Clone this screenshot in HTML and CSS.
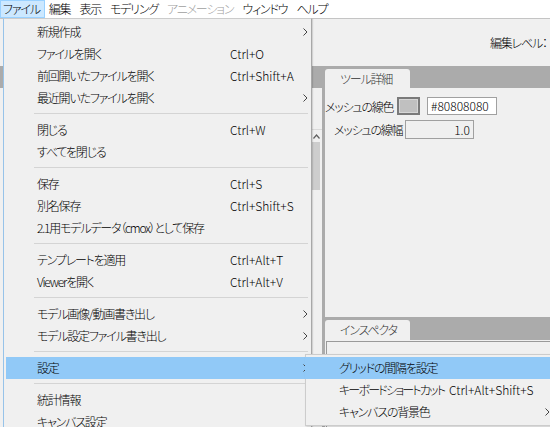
FILE: index.html
```html
<!DOCTYPE html>
<html lang="ja">
<head>
<meta charset="utf-8">
<title>File menu</title>
<link rel="stylesheet" href="styles.css">
</head>
<body>
<div class="window">
  <nav class="menubar">
    <span class="mb-item active">ファイル</span>
    <span class="mb-item">編集</span>
    <span class="mb-item">表示</span>
    <span class="mb-item">モデリング</span>
    <span class="mb-item disabled">アニメーション</span>
    <span class="mb-item">ウィンドウ</span>
    <span class="mb-item">ヘルプ</span>
  </nav>
  <div class="main">
    <div class="toolbar"><span class="edit-level">編集レベル：</span></div>
    <div class="workspace">
      <section class="left-panel">
        <div class="panel-head"></div>
        <div class="left-body">
          <div class="scrollbar">
            <div class="sb-up"><svg width="7" height="5" viewBox="0 0 7 5"><polyline points="0.5,4.5 3.5,1 6.5,4.5" fill="none" stroke="#606060" stroke-width="1.2"/></svg></div>
            <div class="sb-thumb"></div>
          </div>
        </div>
      </section>
      <section class="right-col">
        <div class="tool-panel">
          <div class="panel-head"><div class="tab">ツール詳細</div></div>
          <div class="tool-body">
            <div class="row row-color">
              <span class="lbl lbl-color">メッシュの線色</span>
              <span class="swatch"></span>
              <span class="field field-hex">#80808080</span>
            </div>
            <div class="row row-width">
              <span class="lbl lbl-width">メッシュの線幅</span>
              <span class="field field-num">1.0</span>
            </div>
          </div>
        </div>
        <div class="inspector">
          <div class="panel-head insp-head"><div class="tab tab-insp">インスペクタ</div></div>
          <div class="insp-body"><div class="insp-box"></div></div>
        </div>
      </section>
    </div>
  </div>

  <div class="menu">
    <div class="mi"><span></span><span>新規作成</span><span></span><span class="arr"><svg width="5" height="8" viewBox="0 0 5 8"><polyline points="0.5,0.5 4,4 0.5,7.5" fill="none" stroke="#444" stroke-width="1"/></svg></span></div>
    <div class="mi"><span></span><span>ファイルを開く</span><span>Ctrl+O</span><span></span></div>
    <div class="mi"><span></span><span>前回開いたファイルを開く</span><span>Ctrl+Shift+A</span><span></span></div>
    <div class="mi"><span></span><span>最近開いたファイルを開く</span><span></span><span class="arr"><svg width="5" height="8" viewBox="0 0 5 8"><polyline points="0.5,0.5 4,4 0.5,7.5" fill="none" stroke="#444" stroke-width="1"/></svg></span></div>
    <div class="sep"></div>
    <div class="mi"><span></span><span>閉じる</span><span>Ctrl+W</span><span></span></div>
    <div class="mi"><span></span><span>すべてを閉じる</span><span></span><span></span></div>
    <div class="sep"></div>
    <div class="mi"><span></span><span>保存</span><span>Ctrl+S</span><span></span></div>
    <div class="mi"><span></span><span>別名保存</span><span>Ctrl+Shift+S</span><span></span></div>
    <div class="mi"><span></span><span class="wide">2.1用モデルデータ（cmox）として保存</span><span></span></div>
    <div class="sep"></div>
    <div class="mi"><span></span><span>テンプレートを適用</span><span>Ctrl+Alt+T</span><span></span></div>
    <div class="mi"><span></span><span>Viewerを開く</span><span>Ctrl+Alt+V</span><span></span></div>
    <div class="sep"></div>
    <div class="mi"><span></span><span>モデル画像/動画書き出し</span><span></span><span class="arr"><svg width="5" height="8" viewBox="0 0 5 8"><polyline points="0.5,0.5 4,4 0.5,7.5" fill="none" stroke="#444" stroke-width="1"/></svg></span></div>
    <div class="mi"><span></span><span>モデル設定ファイル書き出し</span><span></span><span class="arr"><svg width="5" height="8" viewBox="0 0 5 8"><polyline points="0.5,0.5 4,4 0.5,7.5" fill="none" stroke="#444" stroke-width="1"/></svg></span></div>
    <div class="sep"></div>
    <div class="mi hl"><span></span><span>設定</span><span></span><span class="arr"><svg width="5" height="8" viewBox="0 0 5 8"><polyline points="0.5,0.5 4,4 0.5,7.5" fill="none" stroke="#444" stroke-width="1"/></svg></span></div>
    <div class="sep"></div>
    <div class="mi"><span></span><span>統計情報</span><span></span><span></span></div>
    <div class="mi"><span></span><span>キャンバス設定</span><span></span><span></span></div>
  </div>

  <div class="submenu">
    <div class="si hl"><span></span><span>グリッドの間隔を設定</span><span></span><span></span></div>
    <div class="si"><span></span><span class="tight">キーボードショートカット</span><span>Ctrl+Alt+Shift+S</span><span></span></div>
    <div class="si"><span></span><span>キャンバスの背景色</span><span></span><span class="arr"><svg width="5" height="8" viewBox="0 0 5 8"><polyline points="0.5,0.5 4,4 0.5,7.5" fill="none" stroke="#444" stroke-width="1"/></svg></span></div>
  </div>
</div>
</body>
</html>
```

FILE: styles.css
```css
* { box-sizing: border-box; }

body {
  margin: 0;
  width: 550px;
  height: 427px;
  overflow: hidden;
  background: #f0f0f0;
  font-family: "Noto Sans CJK JP", "Noto Sans", sans-serif;
  font-feature-settings: "palt";
  font-size: 12px;
  font-weight: 300;
  color: #000;
}

/* Japanese labels: tighten to approximate the narrow UI face */
.mb-item,
.mi > span:nth-child(2),
.si > span:nth-child(2),
.lbl,
.tab,
.edit-level {
  letter-spacing: -1.2px;
}
.si > span.tight { letter-spacing: -1.8px; }

.window {
  position: relative;
  width: 550px;
  height: 427px;
  overflow: hidden;
  display: flex;
  flex-direction: column;
}

/* ---------- menu bar ---------- */
.menubar {
  height: 19px;
  flex-shrink: 0;
  background: #fff;
  border-bottom: 1px solid #c4c4c4;
  display: flex;
  align-items: stretch;
  white-space: nowrap;
}
.mb-item {
  padding: 0 4px 0 3px;
  line-height: 16px;
  border: 1px solid transparent;
}
.mb-item.active {
  padding-left: 2px;
  background: #cce8ff;
  border-color: #99d1ff;
}
.mb-item.disabled { color: #a0a0a0; }

/* ---------- main area ---------- */
.main {
  flex: 1;
  display: flex;
  flex-direction: column;
  min-height: 0;
}
.toolbar {
  height: 47px;
  flex-shrink: 0;
  display: flex;
  align-items: center;
  padding-left: 490px;
  white-space: nowrap;
  overflow: hidden;
}
.workspace {
  flex: 1;
  display: flex;
  background: #ababab;
  min-height: 0;
}
.panel-head {
  height: 22px;
  flex-shrink: 0;
}
.left-panel {
  width: 322px;
  flex-shrink: 0;
  display: flex;
  flex-direction: column;
}
.left-body {
  flex: 1;
  background: #f0f0f0;
  display: flex;
  justify-content: flex-end;
}
.scrollbar {
  width: 12px;
  margin-top: 41px;
  border-top: 1px solid #dadada;
  background: #f0f0f0;
  display: flex;
  flex-direction: column;
  align-items: stretch;
}
.sb-up {
  height: 12px;
  display: flex;
  align-items: center;
  justify-content: center;
}
.sb-thumb {
  height: 48px;
  margin: 0 2px;
  background: #cdcdcd;
}

.right-col {
  flex: 1;
  margin-left: 3px;
  display: flex;
  flex-direction: column;
  min-width: 0;
}
.tool-panel {
  height: 251px;
  flex-shrink: 0;
  display: flex;
  flex-direction: column;
}
.tab {
  margin-top: 3px;
  width: 85px;
  height: 19px;
  line-height: 19px;
  padding-left: 15px;
  background: #f0f0f0;
  border-radius: 3px 3px 0 0;
  color: #333;
}
.tool-body {
  flex: 1;
  background: #f0f0f0;
  padding-top: 9px;
}
.row {
  display: flex;
  align-items: center;
  white-space: nowrap;
}
.row-color { height: 18px; }
.row-width {
  height: 19px;
  margin-top: 5px;
  padding-left: 9px;
}
.lbl { flex-shrink: 0; }
.lbl-color { width: 72px; }
.lbl-width { width: 71px; }
.swatch {
  width: 23px;
  height: 18px;
  border: 2px solid #7a7a7a;
  background: #c0c0c0;
  box-shadow: inset 0 0 0 1px #d6d6d6;
  margin-right: 7px;
}
.field {
  height: 100%;
  border: 1px solid #a0a0a0;
  line-height: 16px;
}
.field-hex {
  width: 70px;
  background: #fff;
  padding-left: 3px;
}
.field-num {
  width: 69px;
  background: #f0f0f0;
  text-align: right;
  padding-right: 3px;
  line-height: 17px;
}

.inspector {
  flex: 1;
  display: flex;
  flex-direction: column;
}
.insp-head { height: 23px; }
.tab-insp {
  height: 20px;
  line-height: 20px;
}
.insp-body {
  flex: 1;
  background: #f0f0f0;
  padding: 1px 0 0 1px;
}
.insp-box {
  height: 200px;
  border: 1px solid #9a9a9a;
  border-right: none;
}

/* ---------- dropdown menu ---------- */
.menu {
  position: absolute;
  left: 3px;
  top: 18px;
  width: 309px;
  height: 430px;
  padding: 2px;
  background: #f0f0f0;
  border: 1px solid #cccccc;
  border-left-color: #97c3e9;
  border-right-color: #a8a8a8;
  box-shadow: 1px 1px 1px rgba(0, 0, 0, 0.12);
}
.mi, .si {
  display: grid;
  height: 22px;
  line-height: 22px;
  white-space: nowrap;
}
.mi { grid-template-columns: 31px 193px 1fr 12px; }
.mi .wide { grid-column: 2 / 4; }
.hl { background: #91c9f7; }
.arr {
  display: flex;
  align-items: center;
}
.mi .arr { padding-left: 6px; }
.sep {
  height: 10px;
  padding: 4px 1px 0 28px;
}
.sep::after {
  content: "";
  display: block;
  height: 1px;
  background: #d4d4d4;
}

.submenu {
  position: absolute;
  left: 305px;
  top: 354px;
  width: 255px;
  padding: 2px 2px 2px 0;
  background: #f0f0f0;
  border: 1px solid #cccccc;
  box-shadow: 1px 1px 2px rgba(0, 0, 0, 0.15);
}
.si {
  margin-left: -1px;
  grid-template-columns: 34px 110px 1fr 14px;
}
.si .arr { padding-left: 2px; }
```
